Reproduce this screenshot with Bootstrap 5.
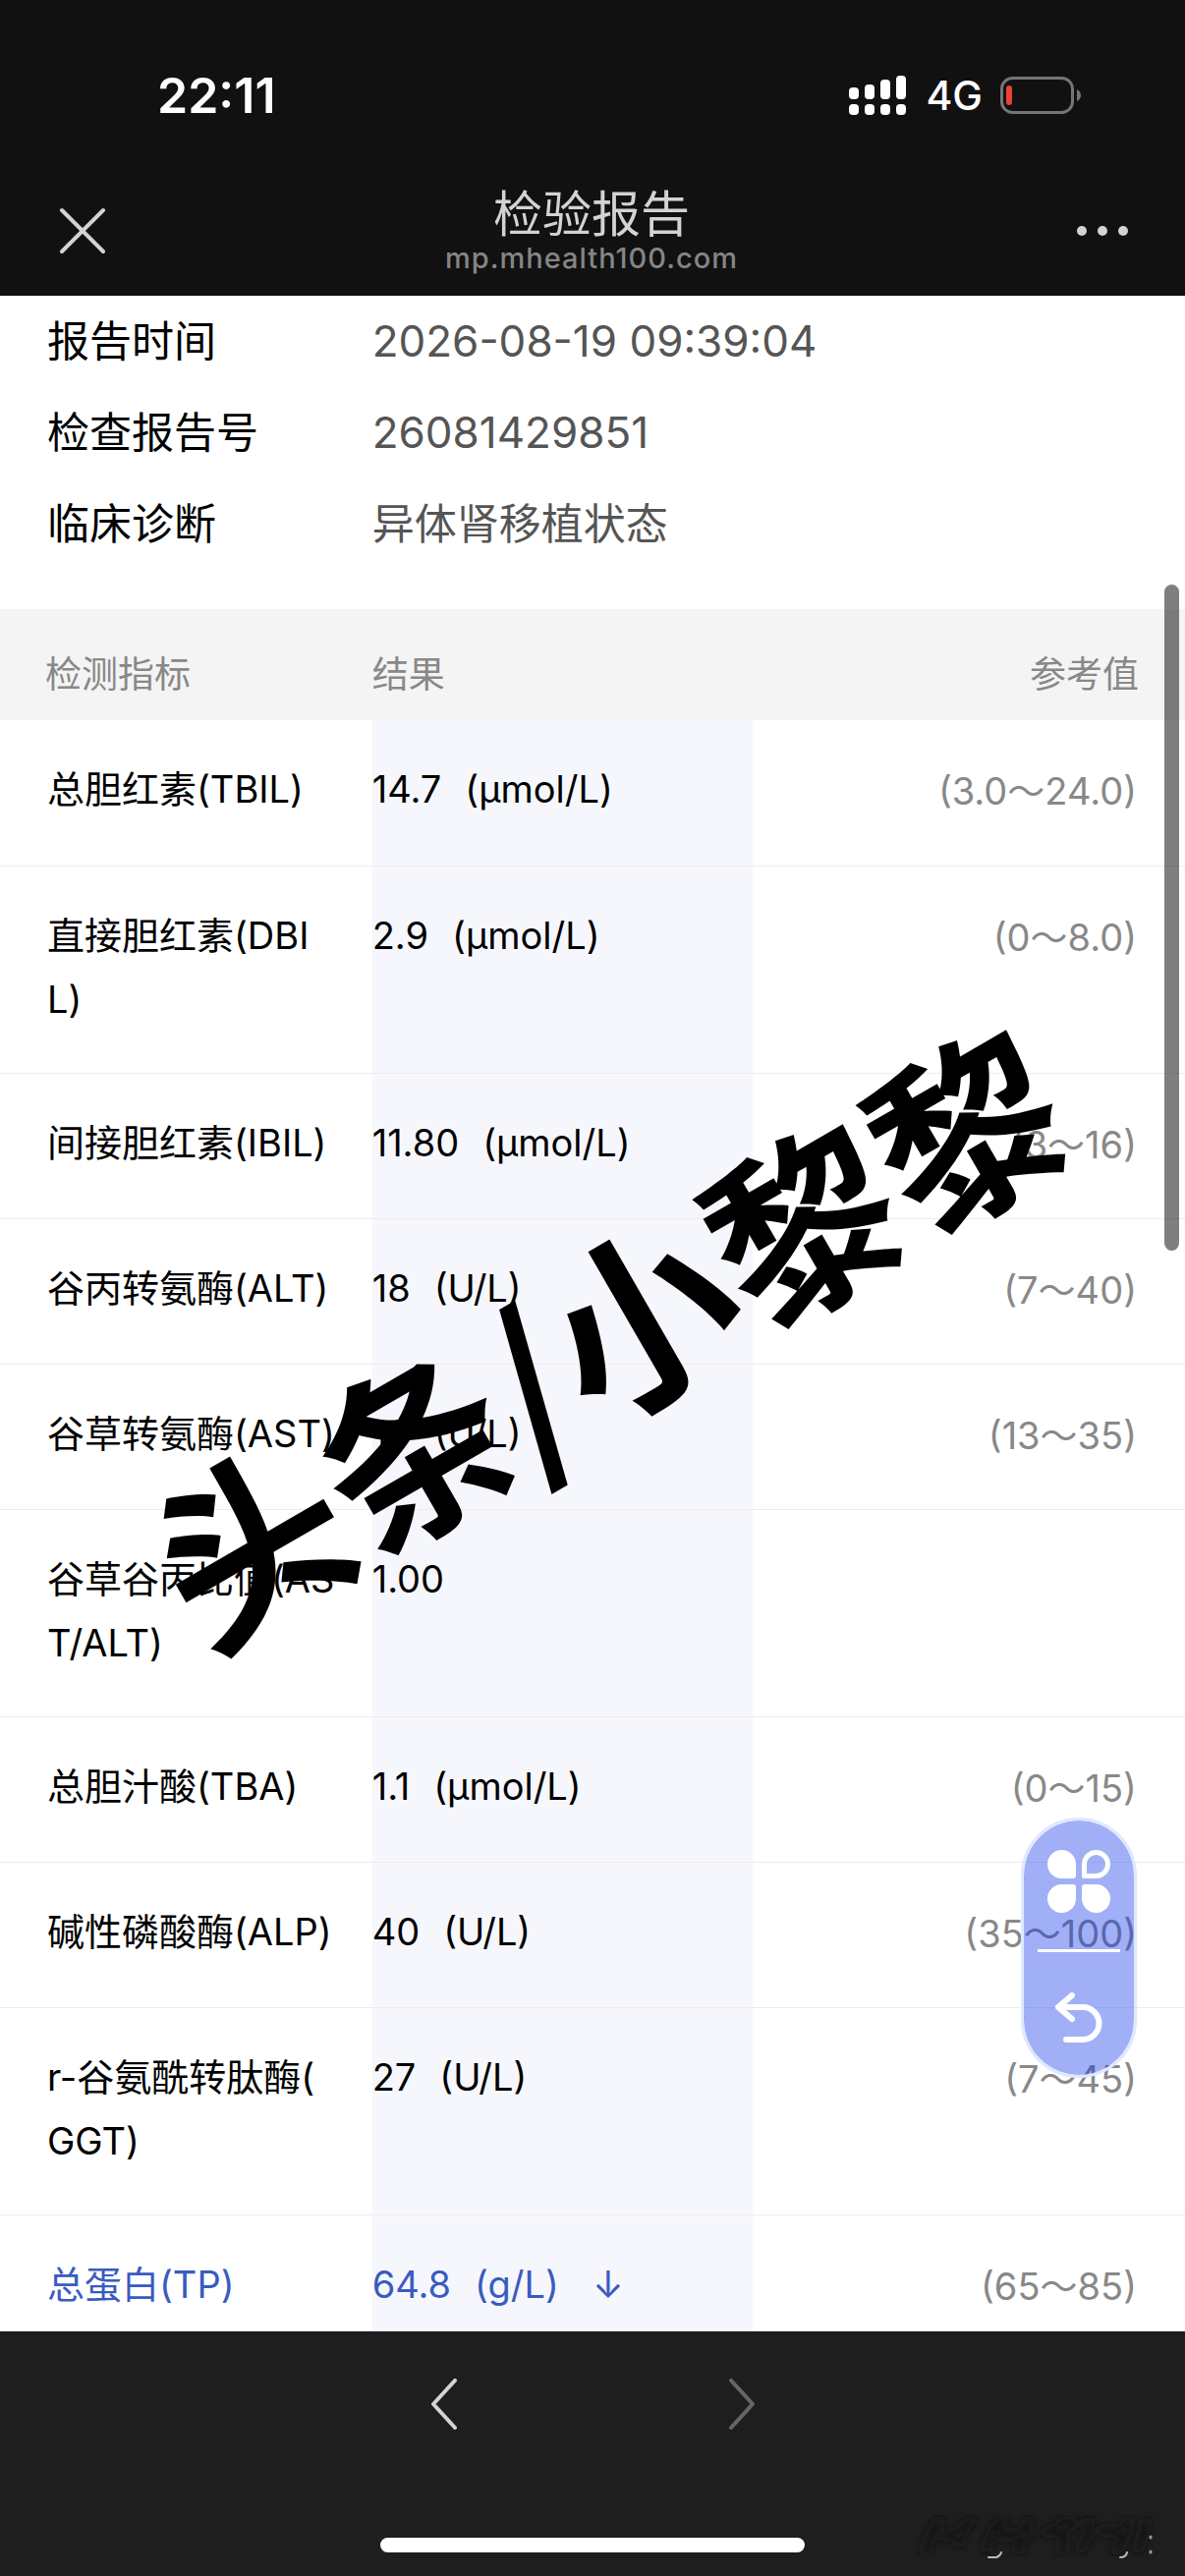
<!DOCTYPE html>
<html lang="zh-CN">
<head>
<meta charset="utf-8">
<meta name="viewport" content="width=device-width, initial-scale=1">
<title>检验报告</title>
<link href="https://cdn.jsdelivr.net/npm/bootstrap@5.3.0/dist/css/bootstrap.min.css" rel="stylesheet">
<style>
body{font-family:Inter,"Noto Sans CJK SC",sans-serif;color:#000;background:#fff}
.screen{height:100vh}
.top-area{background:#111;color:#d3d3d3}
.status-line{height:194px;padding:0 106px 0 160px}
.clock{font-size:50px;font-weight:600;line-height:1;color:#fff}
.network{font-size:41px;font-weight:500;line-height:1;color:#fff;margin:0 18px 0 20px}
.title-line{height:107px;padding:0 52px 0 58px}
.icon-button{background:none;border:0;padding:0;color:inherit;line-height:0}
.title-line .icon-button{padding-top:11px}
.page-title{font-size:50px;line-height:48px;margin:0;font-weight:400}
.page-host{font-size:29px;font-weight:500;line-height:32px;color:#858585;padding-top:5px;letter-spacing:1px}
.report-info{font-size:43px;line-height:93px;margin:0;padding-bottom:40px}
.report-info dt{width:31.4%;padding-left:48px;font-weight:400}
.report-info dd{margin:0;color:#555}
.report-info .digits{font-size:44px}
.indicators{table-layout:fixed;width:100%;font-size:38px;line-height:65px;white-space:nowrap}
.indicators th,.indicators td{font-weight:400;vertical-align:top}
.indicators thead th{background:#f4f4f4;color:#888;font-size:37px;height:113px;padding:34px 0 0}
.indicators thead th:first-child{padding-left:46px}
.indicators thead th:last-child{padding-right:47px;text-align:right}
.indicators tbody tr{height:148px;border-bottom:1px solid #ececee}
.indicators tbody th{padding:38px 0 42px 48px}
.indicators tbody td{padding:38px 0 42px}
.indicators tbody td:nth-child(2){background:#f6f7fd}
.indicators tbody td:last-child{padding:40px 49px 40px 0;text-align:right;color:#888}
.unit{margin-left:24px}
.trend{margin-left:34px}
.low-value th,.low-value td:nth-child(2){color:#3a5bbf}
.scroll-thumb{right:6px;top:294px;width:15px;height:678px;border-radius:8px;background:rgba(0,0,0,.5)}
.quick-menu{right:49px;top:1549px;width:118px;border:3px solid #e0e8ff;border-radius:60px;background:rgba(20,58,232,.4);background-clip:padding-box;color:#fff;padding:30px 0 32px}
.quick-menu hr{width:84px;height:3px;margin:37px 0 41px;background:#fff;border:0;opacity:1}
.watermark{left:51%;top:1052px;font-size:192px;line-height:1;font-weight:700;font-family:"Noto Sans CJK SC",sans-serif;white-space:nowrap;transform:translate(-50%,-50%) rotate(-30deg);pointer-events:none}
.bottom-area{background:#1e1e1e;height:249px;padding:48px 0 24px}
.page-nav{gap:275px;color:#d3d3d3}
.page-nav :disabled{color:#666}
.home-bar{width:432px;height:15px;border-radius:8px;background:#fff}
.smudge{right:16px;bottom:12px}
</style>
</head>
<body>
<div class="screen d-flex flex-column">
  <header class="top-area flex-shrink-0">
    <div class="status-line d-flex align-items-center justify-content-between">
      <span class="clock">22:11</span>
      <div class="d-flex align-items-center">
        <svg width="58" height="40" viewBox="0 0 58 40" fill="#fff" aria-hidden="true"><rect x="0" y="12" width="10" height="12" rx="4"/><rect x="16" y="9" width="10" height="15" rx="4"/><rect x="32" y="4" width="10" height="20" rx="4"/><rect x="48" y="0" width="10" height="24" rx="4"/><rect x="0" y="29" width="10" height="11" rx="4"/><rect x="16" y="29" width="10" height="11" rx="4"/><rect x="32" y="29" width="10" height="11" rx="4"/><rect x="48" y="29" width="10" height="11" rx="4"/></svg>
        <span class="network">4G</span>
        <svg width="82" height="40" viewBox="0 0 82 40" aria-hidden="true"><rect x="1.5" y="2.500" width="72" height="35" rx="11" fill="none" stroke="#757575" stroke-width="3"/><path d="M78 14q4 2 4 6t-4 6z" fill="#757575"/><rect x="6" y="10" width="6" height="20" rx="3" fill="#eb4136"/></svg>
      </div>
    </div>
    <div class="title-line d-flex justify-content-between">
      <button class="icon-button align-self-start" type="button" aria-label="关闭"><svg width="52" height="64" viewBox="0 0 52 64" fill="none" stroke="currentColor" stroke-width="4" stroke-linecap="round"><path d="M5 9l42 42M47 9L5 51"/></svg></button>
      <div class="text-center">
        <h1 class="page-title">检验报告</h1>
        <div class="page-host">mp.mhealth100.com</div>
      </div>
      <button class="icon-button align-self-start" type="button" aria-label="更多"><svg width="60" height="64" viewBox="0 0 60 64" fill="currentColor"><circle cx="7" cy="30" r="5"/><circle cx="28" cy="30" r="5"/><circle cx="49" cy="30" r="5"/></svg></button>
    </div>
  </header>

  <main class="flex-grow-1 overflow-hidden position-relative">
    <dl class="report-info">
      <div class="d-flex"><dt>报告时间</dt><dd class="digits">2026-08-19 09:39:04</dd></div>
      <div class="d-flex"><dt>检查报告号</dt><dd class="digits">26081429851</dd></div>
      <div class="d-flex"><dt>临床诊断</dt><dd>异体肾移植状态</dd></div>
    </dl>
    <table class="indicators">
      <colgroup><col style="width:31.4%"><col style="width:32.1%"><col></colgroup>
      <thead><tr><th scope="col">检测指标</th><th scope="col">结果</th><th scope="col">参考值</th></tr></thead>
      <tbody>
        <tr><th scope="row">总胆红素(TBIL)</th><td>14.7<span class="unit">(μmol/L)</span></td><td>(3.0～24.0)</td></tr>
        <tr><th scope="row">直接胆红素(DBI<br>L)</th><td>2.9<span class="unit">(μmol/L)</span></td><td>(0～8.0)</td></tr>
        <tr><th scope="row">间接胆红素(IBIL)</th><td>11.80<span class="unit">(μmol/L)</span></td><td>(3～16)</td></tr>
        <tr><th scope="row">谷丙转氨酶(ALT)</th><td>18<span class="unit">(U/L)</span></td><td>(7～40)</td></tr>
        <tr><th scope="row">谷草转氨酶(AST)</th><td>18<span class="unit">(U/L)</span></td><td>(13～35)</td></tr>
        <tr><th scope="row">谷草谷丙比值(AS<br>T/ALT)</th><td>1.00</td><td></td></tr>
        <tr><th scope="row">总胆汁酸(TBA)</th><td>1.1<span class="unit">(μmol/L)</span></td><td>(0～15)</td></tr>
        <tr><th scope="row">碱性磷酸酶(ALP)</th><td>40<span class="unit">(U/L)</span></td><td>(35～100)</td></tr>
        <tr><th scope="row">r-谷氨酰转肽酶(<br>GGT)</th><td>27<span class="unit">(U/L)</span></td><td>(7～45)</td></tr>
        <tr class="low-value"><th scope="row">总蛋白(TP)</th><td>64.8<span class="unit">(g/L)</span><span class="trend">↓</span></td><td>(65～85)</td></tr>
      </tbody>
    </table>
    <div class="scroll-thumb position-absolute"></div>
    <div class="watermark position-absolute">头条/小黎黎</div>
    <div class="quick-menu position-absolute d-flex flex-column align-items-center">
      <button class="icon-button" type="button" aria-label="菜单"><svg width="64" height="64" viewBox="0 0 64 64" fill="currentColor"><path d="M14.500 0A14.500 14.500 0 0 1 29 14.500V26q0 3-3 3H14.500A14.500 14.500 0 0 1 14.500 0zM14.500 64A14.500 14.500 0 0 0 29 49.500V38q0-3-3-3H14.500A14.500 14.500 0 0 0 14.500 64zM49.500 64A14.500 14.500 0 0 1 35 49.500V38q0-3 3-3h11.500A14.500 14.500 0 0 1 49.500 64z"/><path d="M49.500 2.500A12 12 0 0 0 37.500 14.500V26.500H49.500A12 12 0 0 0 49.500 2.500z" fill="none" stroke="currentColor" stroke-width="5" stroke-linejoin="round"/></svg></button>
      <hr>
      <button class="icon-button" type="button" aria-label="返回"><svg width="50" height="52" viewBox="0 0 50 52" fill="none" stroke="currentColor" stroke-width="6" stroke-linecap="round" stroke-linejoin="round"><path d="M18 3L4 15l14 12" /><path d="M5 15H29a16.500 16.500 0 0 1 0 33H12"/></svg></button>
    </div>
  </main>

  <footer class="bottom-area position-relative flex-shrink-0 d-flex flex-column align-items-center justify-content-between">
    <nav class="page-nav d-flex" aria-label="页面导航">
      <button class="icon-button" type="button" aria-label="后退"><svg width="28" height="52" viewBox="0 0 28 52" fill="none" stroke="currentColor" stroke-width="4" stroke-linecap="round" stroke-linejoin="round"><path d="M25 2L3 26l22 24"/></svg></button>
      <button class="icon-button" type="button" aria-label="前进" disabled><svg width="28" height="52" viewBox="0 0 28 52" fill="none" stroke="currentColor" stroke-width="4" stroke-linecap="round" stroke-linejoin="round"><path d="M3 2l22 24L3 50"/></svg></button>
    </nav>
    <div class="home-bar"></div>
    <svg class="smudge position-absolute" width="260" height="56" viewBox="0 0 260 56" fill="none" stroke-linecap="round" aria-hidden="true">
      <defs><filter id="soft"><feGaussianBlur stdDeviation="4"/></filter></defs>
      <g filter="url(#soft)" stroke="#131313" stroke-width="8"><path d="M12 44q4-20 14-32M30 28l14-4M46 34q2-16 12-22M74 40q6-22 18-30M84 26h32M106 42q4-16 10-30M134 24l30-10M152 44V12M170 40q8-12 8-28M190 22h26M206 42q8-12 12-30M228 40q6-12 8-26"/></g>
      <path d="M76 49h8q4-1 5-5M210 49q6 0 7-5" stroke="#bbb" stroke-width="2"/><path d="M241 28v1M241 43v1" stroke="#999" stroke-width="3"/>
    </svg>
  </footer>
</div>
<script src="https://cdn.jsdelivr.net/npm/bootstrap@5.3.0/dist/js/bootstrap.bundle.min.js"></script>
</body>
</html>
